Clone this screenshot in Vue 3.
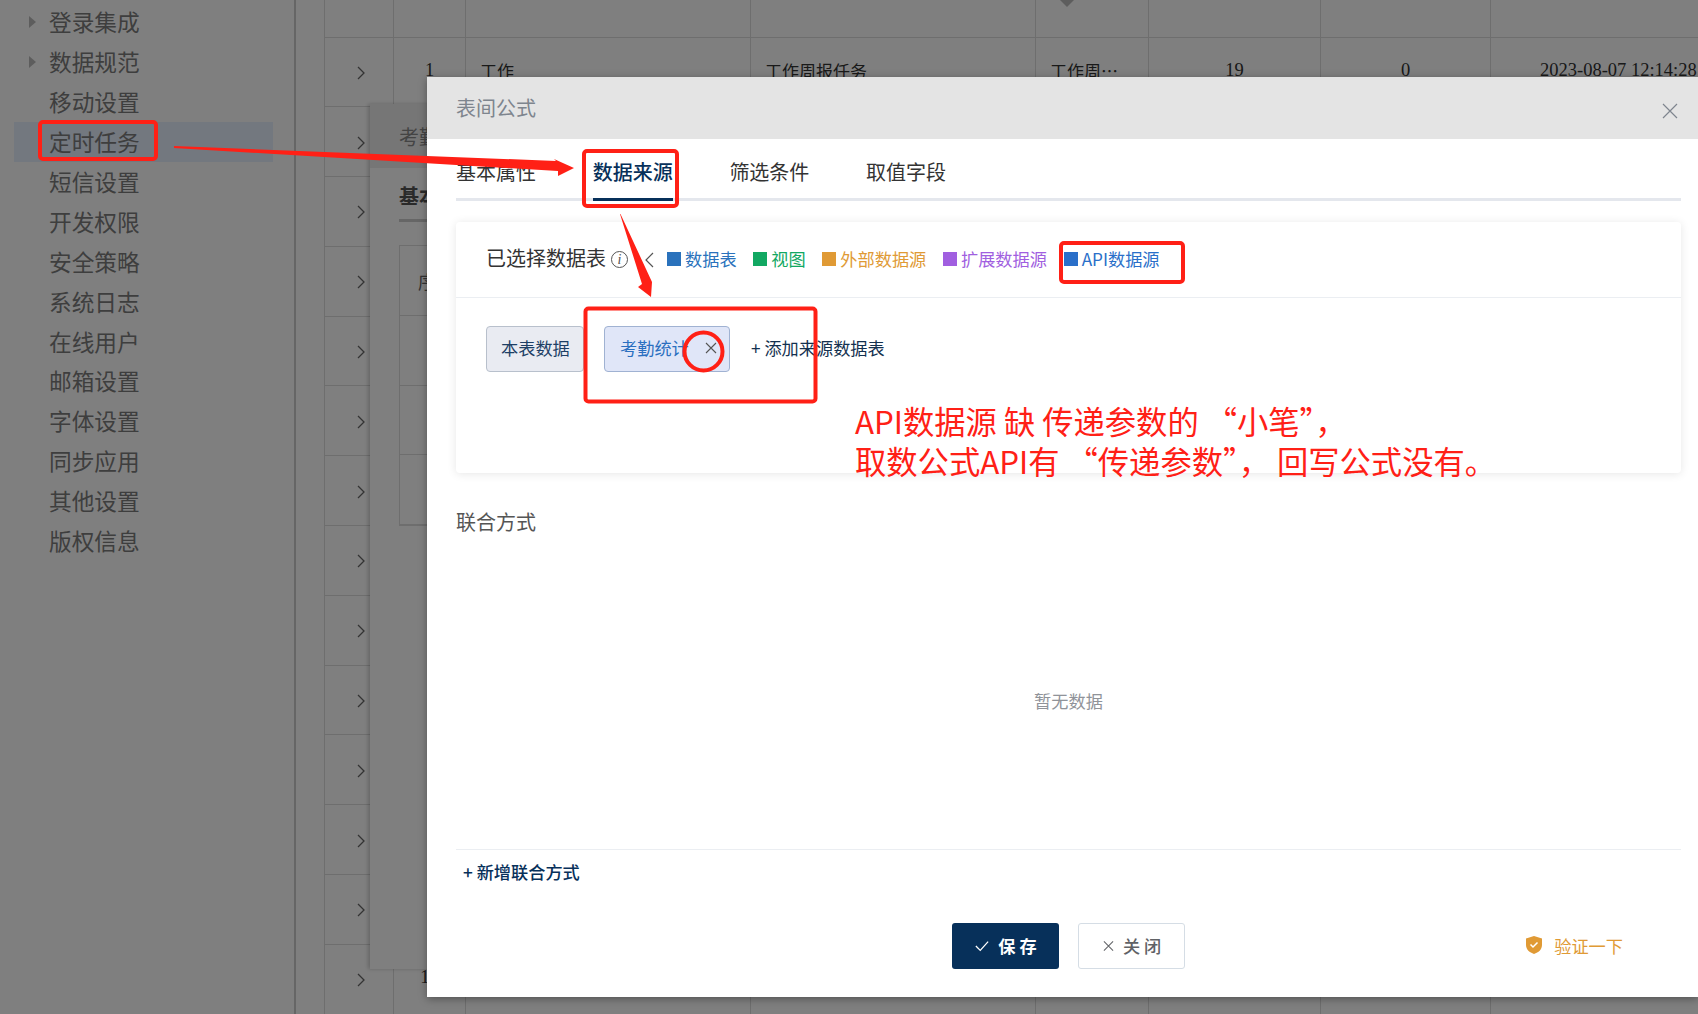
<template>
  <div class="page">
    <aside class="sidebar">
      <div
        v-for="item in menus"
        :key="item.name"
        class="menu-item"
        :class="{ active: item.name === '定时任务' }"
      >
        <span class="arrow" :class="{ show: item.sub }"></span>
        <span>{{ item.name }}</span>
      </div>
    </aside>

    <main class="list">
      <div class="table-row table-head">
        <div v-for="n in 8" :key="n" class="cell"></div>
        <span class="caret"></span>
      </div>
      <div v-for="n in 14" :key="n" class="table-row">
        <div class="cell center">
          <svg class="chevron" viewBox="0 0 8 14"><path d="M1 1l6 6-6 6" /></svg>
        </div>
        <div class="cell center num">{{ n }}</div>
        <div class="cell"><span v-if="n === 1">工作</span></div>
        <div class="cell"><span v-if="n === 1">工作周报任务</span></div>
        <div class="cell"><span v-if="n === 1">工作周…</span></div>
        <div class="cell center num"><span v-if="n === 1">19</span></div>
        <div class="cell center num"><span v-if="n === 1">0</span></div>
        <div class="cell num date"><span v-if="n === 1">2023-08-07 12:14:28</span></div>
      </div>
    </main>

    <div class="inner-dialog">
      <div class="inner-head">考勤统计</div>
      <div class="inner-tab">基本属性</div>
      <div class="inner-table">
        <div v-for="n in 4" :key="n" class="inner-row"><span v-if="n === 1">序号</span></div>
      </div>
    </div>

    <div class="mask"></div>

    <section class="modal">
      <header class="modal-head">
        <span>表间公式</span>
        <svg class="modal-close" viewBox="0 0 16 16"><path d="M1 1l14 14M15 1L1 15" /></svg>
      </header>

      <div class="modal-body">
        <nav class="tabs">
          <div
            v-for="tab in tabs"
            :key="tab"
            class="tab"
            :class="{ current: tab === '数据来源' }"
          >{{ tab }}</div>
        </nav>

        <div class="card">
          <div class="card-head">
            <span class="card-title">已选择数据表</span>
            <span class="info">i</span>
            <svg class="back" viewBox="0 0 9 16"><path d="M8 1L1 8l7 7" /></svg>
            <div class="legend">
              <span
                v-for="item in sources"
                :key="item.name"
                class="legend-item"
                :style="{ color: item.color }"
              >
                <i :style="{ background: item.color }"></i>{{ item.name }}
              </span>
            </div>
          </div>
          <div class="chips">
            <div class="chip plain">本表数据</div>
            <div class="chip picked">
              <span>考勤统计</span>
              <svg class="chip-x" viewBox="0 0 12 12"><path d="M1 1l10 10M11 1L1 11" /></svg>
            </div>
            <div class="add-source">+ 添加来源数据表</div>
          </div>
        </div>

        <div class="join-title">联合方式</div>
        <div class="empty">暂无数据</div>
        <div class="add-join">+ 新增联合方式</div>

        <footer class="actions">
          <div></div>
          <div class="buttons">
            <button class="btn primary">
              <svg viewBox="0 0 16 12"><path d="M1 6l5 5 9-10" /></svg>
              保 存
            </button>
            <button class="btn ghost">
              <svg viewBox="0 0 12 12"><path d="M1 1l10 10M11 1L1 11" /></svg>
              关 闭
            </button>
          </div>
          <div class="verify">
            <svg viewBox="0 0 16 18">
              <path class="shield" d="M8 0l8 2.5V9c0 4.5-3.5 7.500-8 9-4.500-1.500-8-4.500-8-9V2.500z" />
              <path class="tick" d="M4.500 8.500l2.500 2.500 4.500-4.500" />
            </svg>
            验证一下
          </div>
        </footer>
      </div>
    </section>

    <svg class="marks" viewBox="0 0 1698 1014">
      <rect x="40" y="122" width="116" height="37" rx="3" />
      <rect x="584" y="151" width="93" height="55" rx="3" />
      <rect x="1061" y="243" width="122" height="39" rx="3" />
      <rect x="585.500" y="308.500" width="230" height="93" rx="3" />
      <ellipse cx="703.500" cy="351.500" rx="19" ry="19" />
      <polygon class="fill" points="174,146 556,161 554,159 574,168 558,176 558,171 174,148" />
      <polygon class="fill" points="620,214 620.500,214 652,282 651,297 638,287 642,284" />
    </svg>

    <div class="note">
      <div>API数据源 缺 传递参数的 “小笔”，</div>
      <div>取数公式API有 “传递参数”， 回写公式没有。</div>
    </div>
  </div>
</template>

<script setup>
const menus = [
  { name: '登录集成', sub: true },
  { name: '数据规范', sub: true },
  { name: '移动设置' },
  { name: '定时任务' },
  { name: '短信设置' },
  { name: '开发权限' },
  { name: '安全策略' },
  { name: '系统日志' },
  { name: '在线用户' },
  { name: '邮箱设置' },
  { name: '字体设置' },
  { name: '同步应用' },
  { name: '其他设置' },
  { name: '版权信息' }
]

const tabs = ['基本属性', '数据来源', '筛选条件', '取值字段']

const sources = [
  { name: '数据表', color: '#2a72bc' },
  { name: '视图', color: '#12a862' },
  { name: '外部数据源', color: '#e09a35' },
  { name: '扩展数据源', color: '#a15fe0' },
  { name: 'API数据源', color: '#2a6fc9' }
]
</script>

<style>
html,
body {
  margin: 0;
  overflow: hidden;
}
</style>

<style scoped>
.page {
  position: relative;
  display: flex;
  width: 1698px;
  height: 1014px;
  overflow: hidden;
  background: #fff;
  color: #333;
  font-family: "Noto Sans CJK SC", "Noto Sans", sans-serif;
}
.sidebar {
  width: 296px;
  flex-shrink: 0;
  padding: 2px 21px 0 14px;
  box-sizing: border-box;
  border-right: 2px solid #ccc;
  background: #fff;
  color: #7c7c7c;
  font-size: 22.700px;
}
.menu-item {
  display: flex;
  align-items: center;
  height: 39.900px;
}
.menu-item.active {
  background: #e6f0ff;
}
.arrow {
  width: 0;
  height: 0;
  margin: 0 13px 0 15px;
  border-left: 7px solid transparent;
  border-top: 6px solid transparent;
  border-bottom: 6px solid transparent;
}
.arrow.show {
  border-left-color: #bbb;
}
.list {
  flex: 1;
  padding-left: 28px;
  min-width: 0;
}
.table-row {
  position: relative;
  display: grid;
  grid-template-columns: 69px 72px 285px 285px 113px 172px 170px 1fr;
  height: 69.800px;
  border-bottom: 1px solid #ddd;
  box-sizing: border-box;
}
.table-head {
  height: 37.500px;
}
.cell {
  display: flex;
  align-items: center;
  padding-left: 14px;
  padding-bottom: 3px;
  box-sizing: border-box;
  border-left: 1px solid #ddd;
  font-size: 17px;
  color: #333;
  white-space: nowrap;
  overflow: hidden;
}
.cell.center {
  justify-content: center;
  padding-left: 0;
}
.num {
  font-family: "Liberation Serif", serif;
  font-size: 18.500px;
}
.date {
  padding-left: 49px;
  overflow: visible;
}
.chevron {
  width: 8px;
  height: 14px;
  margin-top: 5px;
  margin-left: 4px;
  fill: none;
  stroke: #666;
  stroke-width: 1.300;
}
.caret {
  position: absolute;
  left: 736px;
  top: 0;
  border-left: 7px solid transparent;
  border-right: 7px solid transparent;
  border-top: 7px solid #bbb;
}
.inner-dialog {
  position: absolute;
  left: 370px;
  top: 104px;
  width: 300px;
  height: 865px;
  background: #fff;
  box-shadow: -2px 0 4px rgba(0, 0, 0, 0.2);
}
.inner-head {
  height: 64px;
  padding-left: 29px;
  line-height: 66px;
  background: #ececec;
  color: #888;
  font-size: 20px;
}
.inner-tab {
  width: 240px;
  margin-left: 29px;
  height: 54px;
  line-height: 56px;
  border-bottom: 3px solid #ccc;
  box-sizing: border-box;
  font-size: 20px;
  font-weight: 700;
  color: #555;
}
.inner-table {
  margin: 23px 0 0 29px;
  border: 1px solid #ddd;
}
.inner-row {
  height: 69.800px;
  padding-left: 18px;
  border-bottom: 1px solid #ddd;
  box-sizing: border-box;
  line-height: 70px;
  font-size: 18px;
  color: #666;
}
.mask {
  position: absolute;
  inset: 0;
  background: rgba(0, 0, 0, 0.5);
}
.modal {
  position: absolute;
  left: 427px;
  top: 77px;
  width: 1271px;
  height: 920px;
  display: flex;
  flex-direction: column;
  background: #fff;
  box-shadow: 0 2px 8px rgba(0, 0, 0, 0.35);
}
.modal-head {
  display: flex;
  align-items: center;
  justify-content: space-between;
  height: 62px;
  flex-shrink: 0;
  padding: 0 20px 2px 29px;
  box-sizing: border-box;
  background: #e4e4e4;
  color: #7e858e;
  font-size: 20px;
}
.modal-close {
  width: 16px;
  height: 16px;
  margin-top: 8px;
  fill: none;
  stroke: #7e858e;
  stroke-width: 1.200;
}
.modal-body {
  flex: 1;
  display: flex;
  flex-direction: column;
  min-height: 0;
  padding: 0 17px 28px 29px;
}
.tabs {
  display: flex;
  gap: 56.700px;
  height: 62px;
  flex-shrink: 0;
  box-sizing: border-box;
  border-bottom: 3px solid #e4e7ed;
}
.tab {
  height: 62px;
  padding-top: 19px;
  box-sizing: border-box;
  line-height: 28px;
  font-size: 20px;
  color: #333;
}
.tab.current {
  border-bottom: 3px solid #07305a;
  color: #07305a;
  font-weight: 500;
}
.card {
  height: 251px;
  margin-top: 21px;
  flex-shrink: 0;
  box-sizing: border-box;
  border-radius: 4px;
  box-shadow: 0 1px 10px rgba(0, 0, 0, 0.1);
}
.card-head {
  display: flex;
  align-items: center;
  height: 76px;
  padding-left: 30px;
  box-sizing: border-box;
  border-bottom: 1px solid #ebeef2;
}
.card-title {
  margin-top: -5px;
  font-size: 20px;
  color: #333;
}
.info {
  width: 15px;
  height: 15px;
  margin-left: 5px;
  border: 1px solid #555;
  border-radius: 50%;
  color: #555;
  font-family: "Liberation Serif", serif;
  font-size: 14px;
  font-style: italic;
  line-height: 15px;
  text-align: center;
}
.back {
  width: 9px;
  height: 16px;
  margin-left: 17px;
  fill: none;
  stroke: #555;
  stroke-width: 1.200;
}
.legend {
  display: flex;
  gap: 16.700px;
  margin-left: 13px;
}
.legend-item {
  display: flex;
  align-items: center;
  padding-bottom: 2px;
  font-size: 17.200px;
  line-height: 24px;
}
.legend-item i {
  width: 14px;
  height: 14px;
  margin-right: 4px;
}
.chips {
  display: flex;
  align-items: center;
  height: 46px;
  margin: 28px 0 0 30px;
}
.chip {
  display: flex;
  align-items: center;
  height: 46px;
  padding-bottom: 4px;
  box-sizing: border-box;
  border-radius: 4px;
  font-size: 17.200px;
}
.plain {
  width: 98px;
  padding-left: 14px;
  background: #e9ebf2;
  border: 1px solid #b8c0cc;
  color: #1d3f66;
}
.picked {
  position: relative;
  width: 126px;
  margin-left: 20px;
  padding-left: 15px;
  background: #e0e6f8;
  border: 1px solid #a0b2d2;
  color: #2a6fc0;
}
.chip-x {
  position: absolute;
  right: 12px;
  top: 15px;
  width: 12px;
  height: 12px;
  fill: none;
  stroke: #555;
  stroke-width: 1.100;
}
.add-source {
  margin-left: 21px;
  padding-bottom: 4px;
  font-size: 17.200px;
  color: #13304f;
}
.join-title {
  margin-top: 35px;
  margin-bottom: 1px;
  flex-shrink: 0;
  line-height: 28px;
  font-size: 20px;
  color: #555;
}
.empty {
  flex: 1;
  display: flex;
  align-items: center;
  justify-content: center;
  padding-top: 14px;
  border-bottom: 1px solid #ebeef2;
  color: #909399;
  font-size: 17.200px;
}
.add-join {
  height: 46px;
  flex-shrink: 0;
  padding-left: 7px;
  line-height: 44px;
  font-size: 17.200px;
  font-weight: 500;
  color: #07305a;
}
.actions {
  display: grid;
  grid-template-columns: 1fr auto 1fr;
  align-items: center;
  margin-top: 27px;
}
.buttons {
  display: flex;
  gap: 19px;
}
.btn {
  display: flex;
  align-items: center;
  justify-content: center;
  gap: 9px;
  width: 107px;
  height: 46px;
  padding: 0 0 2px 1px;
  border-radius: 3px;
  font-family: inherit;
  font-size: 17.200px;
}
.btn svg {
  width: 14px;
  height: 12px;
  margin-top: 2px;
  fill: none;
  stroke: currentColor;
  stroke-width: 1.500;
}
.primary {
  border: none;
  background: #07305a;
  color: #fff;
  font-weight: 700;
}
.ghost {
  border: 1px solid #d5dde5;
  background: #fff;
  color: #606266;
  font-weight: 500;
}
.ghost svg {
  width: 11px;
  stroke-width: 1.100;
}
.verify {
  display: flex;
  align-items: center;
  justify-content: flex-end;
  gap: 12px;
  padding-right: 58px;
  padding-bottom: 2px;
  font-size: 17.200px;
  color: #e09a35;
}
.verify svg {
  width: 16px;
  height: 18px;
}
.shield {
  fill: #e09a35;
}
.tick {
  fill: none;
  stroke: #fff;
  stroke-width: 1.500;
}
.marks {
  position: absolute;
  inset: 0;
  width: 1698px;
  height: 1014px;
  pointer-events: none;
  fill: none;
  stroke: #ff2016;
  stroke-width: 4;
}
.marks .fill {
  fill: #ff2016;
  stroke: none;
}
.note {
  position: absolute;
  left: 855px;
  top: 401px;
  color: #ff2016;
  font-size: 31.300px;
  line-height: 40px;
  white-space: nowrap;
}
</style>
